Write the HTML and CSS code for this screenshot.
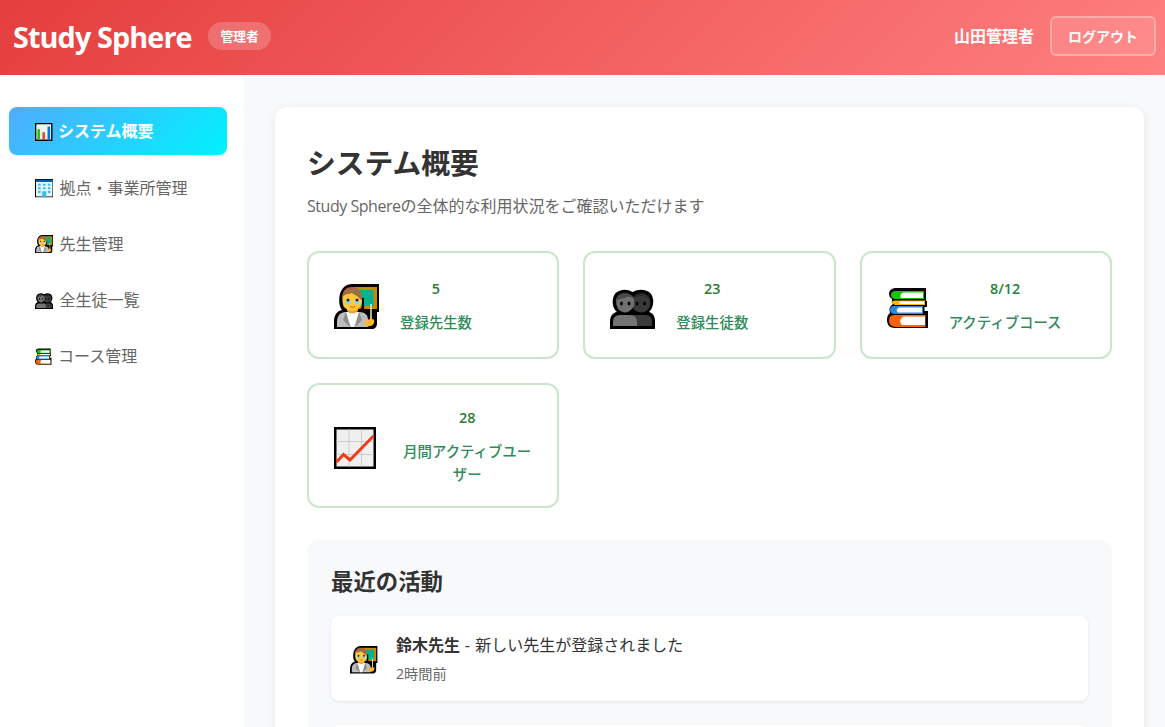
FILE: index.html
```html
<!DOCTYPE html>
<html lang="ja">
<head>
<meta charset="utf-8">
<title>Study Sphere</title>
<link rel="stylesheet" href="styles.css">
</head>
<body>
<svg class="sprite" aria-hidden="true">
  <symbol id="teacher" viewBox="0 0 46 46">
    <path d="M0 45V38C0 31 3 27 8 26C5 22 5 17 5.500 12C7 4 12 0 18 0H45V28H43V39C43 43 41 45 38 45Z" fill="#000"/>
    <path d="M20 3H43V25H20Z" fill="#cf8500"/><path d="M22 6H39.500V22H22Z" fill="#00b294"/>
    <path d="M28 14V22Q26 27 23 28H34V25H30V14Z" fill="#000"/>
    <path d="M3 43V38C3 32 6 28 12 28H25C31 28 34 31 34 36V43Z" fill="#bdbdbd"/>
    <path d="M12 28H25L20 43H17Z" fill="#fff"/><path d="M12 28L9 36L16 43ZM25 28L28 36L21 43Z" fill="#8d8d8d"/>
    <path d="M13 23H24V27Q18 32 13 27Z" fill="#e8a435"/>
    <path d="M8.500 12Q9 5 18 4Q28 5 28 14V18Q26 26 18 27Q9 26 8.500 18Z" fill="#ffc83d"/>
    <path d="M8.500 14C8 6 13 3 18 3C24 3 28 7 28 13V16C25 15 24 12 21 11Q18 8 15 10Q10 10 8.500 14Z" fill="#a56a43"/>
    <circle cx="14" cy="18" r="2.500" fill="#8ed3f4"/><circle cx="23" cy="18" r="2.500" fill="#8ed3f4"/>
    <circle cx="14" cy="16" r="1.500" fill="#222"/><circle cx="23" cy="16" r="1.500" fill="#222"/>
    <path d="M16 22.500Q18.500 24 21 22.500" stroke="#e64c3c" fill="none"/>
    <path d="M37 20V36" stroke="#e6e6e6" stroke-width="1.500"/><path d="M36 33Q38 31 38 35Q41 35 40 39Q38 43 33 42Q29 41 31 37Q33 36 36 35Z" fill="#ffb52e"/>
  </symbol>
  <symbol id="people" viewBox="0 0 46 46">
    <path d="M0 45V38C0 32 3 28.500 7 28C1 23 1 10 9 7Q16 4 22.500 8Q30 4 37 7C45 10 45 23 39 28C43 29 45 32 45 38V45Z" fill="#000"/>
    <circle cx="31" cy="19" r="9.500" fill="#393939"/><path d="M22 15Q25 9 31 9Q38 9 40.500 16L35 12Q28 11 22 15Z" fill="#292929"/>
    <path d="M20 31H36Q42 31 42 38V42H20Z" fill="#3b3b3b"/>
    <path d="M3 42V38Q3 31 10 31H20Q27 31 27 38V42Z" fill="#737373"/>
    <path d="M6 17Q7 9.500 15 9.500Q20 9.500 23 13Q26 20 22 25Q18 29 14 28.500Q6 27 6 17Z" fill="#707070"/>
    <path d="M5.500 17Q7 9 15 9Q21 9 23 14Q18 11 15 14Q10 14 5.500 17Z" fill="#494949"/>
    <g fill="#000"><ellipse cx="11.500" cy="19.500" rx="1.400" ry="2"/><ellipse cx="19" cy="19.500" rx="1.400" ry="2"/><ellipse cx="27" cy="19.500" rx="1.400" ry="2"/><ellipse cx="34.500" cy="19.500" rx="1.400" ry="2"/></g>
  </symbol>
  <symbol id="books" viewBox="0 0 46 46">
    <path d="M8 4H39V17H40V23H37.500V27H41V44H8C3 44 0 41 0 36Q0 31 3 29Q1 23 6 20Q4 18 5 15Q2 13 2 10Q2 5 8 4Z" fill="#000"/>
    <path d="M9 7H37V15H9Q4 15 4 11Q4 7 9 7Z" fill="#16c60c"/><path d="M16 8.500H36V14H14Q12 11 16 8.500Z" fill="#fff"/>
    <path d="M8 16.500H38V21H8Q5 20 5 18Q5 16.500 8 16.500Z" fill="#ffb900"/><path d="M14 17.500H37V20H13Q11 18 14 17.500Z" fill="#fff"/>
    <path d="M7 22H36V30H7Q3 29 3 26Q3 22 7 22Z" fill="#2889df"/><path d="M12 23.500H35V28.500H11Q8 26 12 23.500Z" fill="#fff"/>
    <path d="M7 31H38.500V43H8Q2 42 2 37Q2 31 7 31Z" fill="#f7630c"/><path d="M16 32.500H38V41H15Q11 37 16 32.500Z" fill="#fff"/>
  </symbol>
  <symbol id="growth" viewBox="0 0 46 46">
    <path d="M0 3H42V45H0Z" fill="#000"/><path d="M2.500 5.500H39.500V42.500H2.500Z" fill="#f0f0f0"/>
    <path d="M15 5.500V42.500M27.500 5.500V42.500M2.500 17.500H39.500M2.500 30.500H39.500" stroke="#ccc" fill="none"/>
    <path d="M2.500 38L9.500 30.500L16 36L39.500 12" fill="none" stroke="#f03a17" stroke-width="3"/>
  </symbol>
  <symbol id="bars" viewBox="0 0 18 18">
    <path d="M0 0H17V17.500H0Z"/><path d="M1.300 1.300H15.700V16H1.300Z" fill="#f2f2f2"/>
    <path d="M2.300 6H4.800V16H2.300Z" fill="#16c60c"/><path d="M7.200 9H9.700V16H7.200Z" fill="#e74824"/><path d="M12.200 3.500H14.700V16H12.200Z" fill="#0078d7"/>
  </symbol>
  <symbol id="office" viewBox="0 0 18 18">
    <path d="M0 0H18V18H0Z"/><path d="M1 1H17V17H1Z" fill="#e5f5fc"/><path d="M1 .8H17V3H1Z" fill="#0063b1"/>
    <path d="M3 4.500H5.500V6.500H3ZM7.800 4.500H10.300V6.500H7.800ZM12.500 4.500H15V6.500H12.500ZM3 8H5.500V10H3ZM7.800 8H10.300V10H7.800ZM12.500 8H15V10H12.500ZM3 11.500H5.500V13.500H3ZM7 12H11V17H7ZM12.500 11.500H15V13.500H12.500Z" fill="#35c1f1"/>
  </symbol>
</svg>

<header class="header">
  <div class="brand"><h1 class="logo">Study Sphere</h1><span class="role">管理者</span></div>
  <div class="account"><span class="user">山田管理者</span><button class="logout">ログアウト</button></div>
</header>

<div class="layout">
  <nav class="sidebar">
    <a class="nav-item active"><svg class="nav-icon"><use href="#bars"/></svg><span class="kana">システム概要</span></a>
    <a class="nav-item"><svg class="nav-icon"><use href="#office"/></svg><span>拠点・事業所管理</span></a>
    <a class="nav-item"><svg class="nav-icon"><use href="#teacher"/></svg><span>先生管理</span></a>
    <a class="nav-item"><svg class="nav-icon"><use href="#people"/></svg><span>全生徒一覧</span></a>
    <a class="nav-item"><svg class="nav-icon"><use href="#books"/></svg><span class="kana">コース管理</span></a>
  </nav>
  <main class="main">
    <section class="panel">
      <h2 class="title">システム概要</h2>
      <p class="lead"><span class="lead-latin">Study Sphere</span>の全体的な利用状況をご確認いただけます</p>
      <div class="stats">
        <article class="stat"><svg class="stat-icon"><use href="#teacher"/></svg><div class="stat-text"><div class="value">5</div><div class="label">登録先生数</div></div></article>
        <article class="stat"><svg class="stat-icon"><use href="#people"/></svg><div class="stat-text"><div class="value">23</div><div class="label">登録生徒数</div></div></article>
        <article class="stat stat-narrow"><svg class="stat-icon"><use href="#books"/></svg><div class="stat-text"><div class="value">8/12</div><div class="label">アクティブコース</div></div></article>
        <article class="stat"><svg class="stat-icon"><use href="#growth"/></svg><div class="stat-text stat-text-wide"><div class="value">28</div><div class="label">月間アクティブユーザー</div></div></article>
      </div>
      <section class="activity">
        <h3 class="activity-title">最近の活動</h3>
        <div class="activity-item"><svg class="activity-icon"><use href="#teacher"/></svg><div><p class="message"><strong>鈴木先生</strong><span class="dash"> - </span>新しい先生が登録されました</p><p class="time">2時間前</p></div></div>
        <div class="activity-item"></div>
      </section>
    </section>
  </main>
</div>
</body>
</html>
```
FILE: styles.css
```css
* { box-sizing: border-box; margin: 0; padding: 0; }
body {
  height: 727px;
  overflow: hidden;
  background: #f8f9fb;
  color: #333;
  font: 16px/1.6 "Open Sans", "Noto Sans CJK JP", sans-serif;
}
.sprite { display: none; }
.header {
  display: flex;
  justify-content: space-between;
  align-items: center;
  height: 75px;
  padding: 0 9px 3px 13px;
  background: linear-gradient(135deg, #e53e3e 0%, #ff8080 100%);
  color: #fff;
}
.brand, .account { display: flex; align-items: center; gap: 16px; }
.logo { width: 179px; font-size: 28.8px; line-height: 46px; letter-spacing: -.9px; white-space: nowrap; padding-top: 2px; }
.role { height: 28px; padding: 0 12.4px; border-radius: 14px; background: rgba(255,255,255,.2); font-size: 12.8px; font-weight: 700; line-height: 28px; }
.user { padding-top: 1px; font-weight: 700; }
.logout {
  width: 106px;
  height: 40px;
  padding-bottom: 1px;
  border: 2px solid rgba(255,255,255,.3);
  border-radius: 6px;
  background: rgba(255,255,255,.1);
  color: #fff;
  font: 700 14px "Noto Sans CJK JP", sans-serif;
}
.layout { display: flex; height: 652px; }
.sidebar { display: flex; flex-direction: column; gap: 8px; width: 243px; padding: 32px 16px 0 9px; background: #fff; }
.nav-item { display: flex; align-items: center; gap: 6px; height: 48px; padding: 3px 26px 0; border-radius: 8px; color: #666; white-space: nowrap; }
.nav-item.active { padding-top: 2px; background: linear-gradient(135deg, #4facfe, #00f2fe); color: #fff; font-weight: 700; box-shadow: 0 1px 3px rgba(0,0,0,.1); }
.nav-icon { flex: none; width: 18.5px; height: 18.5px; margin-left: -.5px; }
.nav-item span { margin-left: .5px; }
.nav-item .kana { margin-left: -1px; }
.main { flex: 1; padding: 32px 21px 0 32px; overflow: hidden; }
.panel { height: 900px; padding: 33px 32px 32px; border-radius: 12px; background: #fff; box-shadow: 0 2px 10px rgba(0,0,0,.08); }
.title { font-size: 28.8px; line-height: 46px; }
.lead { margin-top: 7px; color: #666; line-height: 26px; }
.lead-latin { letter-spacing: -.47px; }
.stats { display: grid; grid-template-columns: repeat(3, 1fr); gap: 24px; margin-top: 32px; }
.stat { display: flex; align-items: center; min-height: 108px; padding: 21px 24px 20px; border: 2px solid #c8e6c9; border-radius: 12px; }
.stat-icon { flex: none; width: 46px; height: 46px; margin: 2px 20px 0 1px; }
.stat-narrow .stat-icon { margin: 3px 16px 0 1px; }
.stat-text { text-align: center; }
.stat-text-wide { margin-left: 1px; }
.value { color: #2e7d32; font-size: 14.4px; font-weight: 600; line-height: 23px; }
.label { margin-top: 11px; color: #2e8b57; font-size: 14.4px; font-weight: 500; line-height: 23px; }
.activity { margin-top: 32px; padding: 24px; border-radius: 12px; background: #f8f9fa; }
.activity-title { font-size: 22.4px; line-height: 36px; margin-bottom: 16px; }
.activity-item { display: flex; align-items: center; gap: 18px; height: 85px; margin-bottom: 24px; padding: 0 19px; border-radius: 8px; background: #fff; box-shadow: 0 1px 3px rgba(0,0,0,.1); }
.activity-icon { width: 28px; height: 28px; margin-top: 2px; }
.message { line-height: 26px; }
.dash { letter-spacing: .6px; }
.time { margin-top: 4px; color: #666; font-size: 14.2px; line-height: 23px; }
```
